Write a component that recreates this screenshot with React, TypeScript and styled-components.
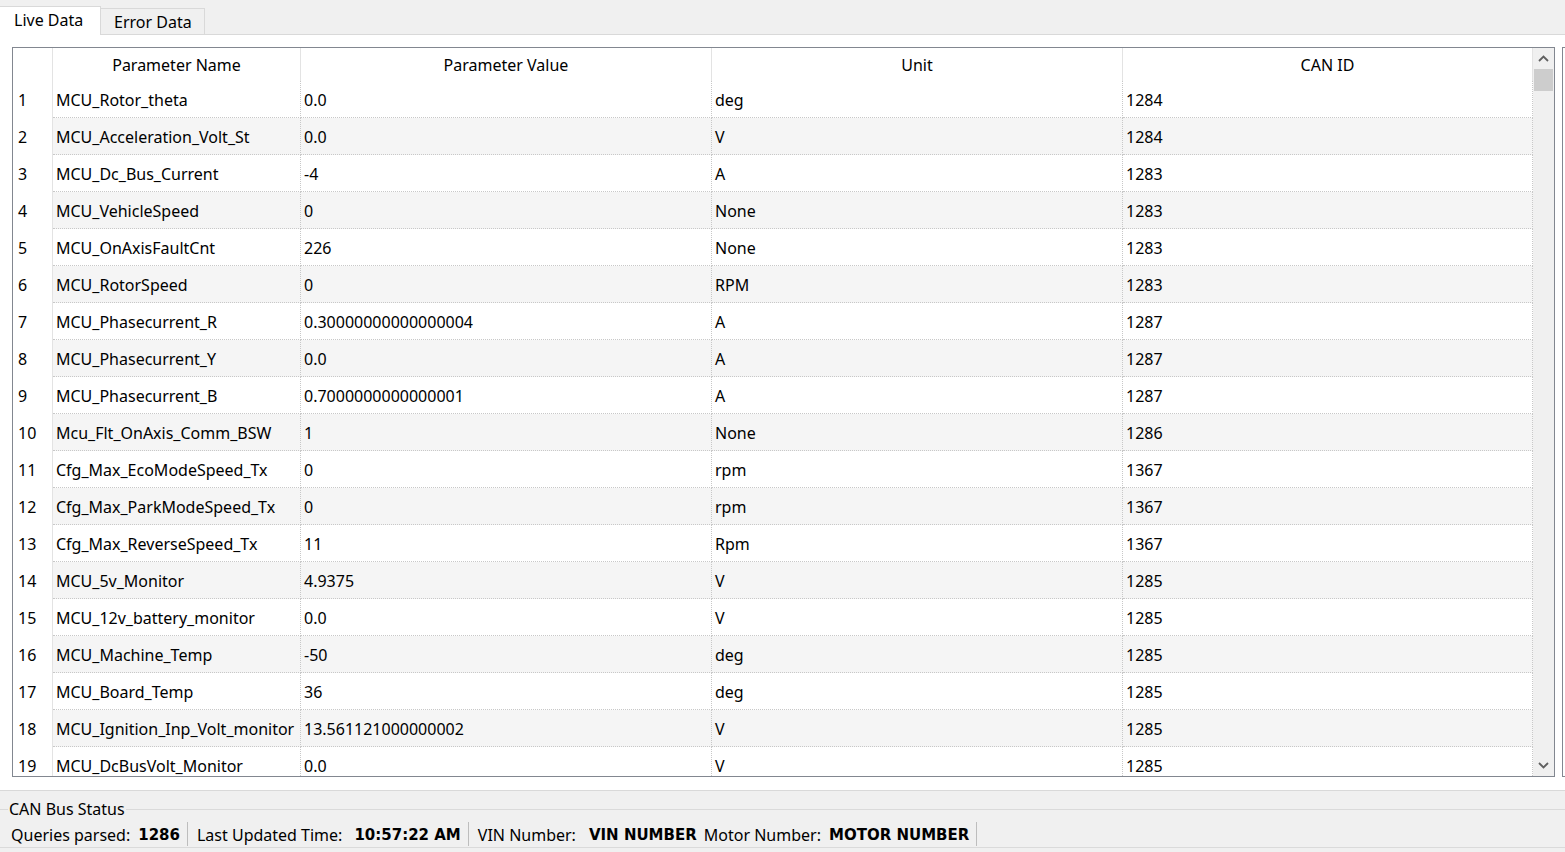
import React from "react";
import styled, { createGlobalStyle } from "styled-components";

const GlobalStyle = createGlobalStyle`
  html, body { margin: 0; padding: 0; }
  body {
    background: #f0f0f0;
    font-family: "Noto Sans", "Open Sans", sans-serif;
    font-size: 16px;
    color: #000;
    overflow: hidden;
  }
  * { box-sizing: border-box; }
`;

const Page = styled.div`
  width: 1565px;
  height: 852px;
  display: flex;
  flex-direction: column;
  overflow: hidden;
`;

const TabBar = styled.div`
  height: 35px;
  flex: none;
  display: flex;
  align-items: flex-end;
  border-bottom: 1px solid #d9d9d9;
`;

const Tab = styled.div<{ $active?: boolean }>`
  width: ${(p) => (p.$active ? "101px" : "104px")};
  height: ${(p) => (p.$active ? "29px" : "26px")};
  margin-bottom: ${(p) => (p.$active ? "-1px" : "0")};
  background: ${(p) => (p.$active ? "#ffffff" : "#f0f0f0")};
  border-top: 1px solid #d9d9d9;
  border-right: 1px solid #d9d9d9;
  padding-left: ${(p) => (p.$active ? "14px" : "13px")};
  padding-bottom: ${(p) => (p.$active ? "2px" : "0")};
  display: flex;
  align-items: center;
  font-size: 16px;
  line-height: 1;
  white-space: nowrap;
`;

const Pane = styled.div`
  flex: none;
  height: 756px;
  background: #fff;
  border-bottom: 1px solid #d9d9d9;
  padding: 12px 0 13px 12px;
  display: flex;
  gap: 7px;
`;

const TableFrame = styled.div`
  width: 1543px;
  height: 730px;
  flex: none;
  border: 1px solid #828790;
  display: flex;
`;

const Stub = styled.div`
  width: 20px;
  height: 730px;
  flex: none;
  border: 1px solid #828790;
  border-right: none;
`;

const GridArea = styled.div`
  width: 1520px;
  height: 728px;
  overflow: hidden;
  display: flex;
  flex-direction: column;
`;

const COLS = "40px 248px 411px 411px 410px";

const HeaderRow = styled.div`
  display: grid;
  grid-template-columns: ${COLS};
  height: 33px;
  flex: none;
`;

const HeaderCell = styled.div`
  display: flex;
  align-items: center;
  justify-content: center;
  border-right: 1px solid #e3e3e3;
  padding-top: 1px;
`;

const Row = styled.div`
  display: grid;
  grid-template-columns: ${COLS};
  height: 37px;
  flex: none;
`;

const RowNum = styled.div`
  background: #fff;
  border-right: 1px solid #e3e3e3;
  padding-left: 5px;
  display: flex;
  align-items: center;
  padding-top: 1px;
`;

const Cell = styled.div<{ $alt: boolean }>`
  background: ${(p) => (p.$alt ? "#f5f5f5" : "#ffffff")};
  border-right: 1px dotted #c8c8c8;
  border-bottom: 1px dotted #c8c8c8;
  padding-left: 3px;
  display: flex;
  align-items: center;
  padding-top: 1px;
  white-space: nowrap;
  overflow: hidden;
`;

const ScrollBar = styled.div`
  width: 21px;
  height: 728px;
  background: #f0f0f0;
  display: flex;
  flex-direction: column;
  align-items: center;
`;

const ArrowBox = styled.div`
  width: 21px;
  height: 21px;
  display: flex;
  align-items: center;
  justify-content: center;
  flex: none;
`;

const Track = styled.div`
  flex: 1;
  width: 100%;
  display: flex;
  flex-direction: column;
  align-items: center;
`;

const Thumb = styled.div`
  width: 19px;
  height: 22px;
  background: #cdcdcd;
`;

const Bottom = styled.div`
  flex: none;
  height: 61px;
  padding-top: 18px;
`;

const GroupBox = styled.div`
  position: relative;
  height: 39px;
  border-top: 1px solid #dadada;
  border-bottom: 1px solid #dadada;
`;

const Legend = styled.span`
  position: absolute;
  left: 8px;
  top: -12px;
  background: #f0f0f0;
  padding: 0 1px;
  font-size: 16px;
  line-height: 22px;
`;

const StatusRow = styled.div`
  display: flex;
  align-items: center;
  height: 100%;
  padding-left: 11px;
  padding-top: 12px;
`;

const Label = styled.span<{ $ml?: number }>`
  font-size: 16px;
  margin-left: ${(p) => p.$ml ?? 0}px;
  white-space: nowrap;
  line-height: 24px;
`;

const Value = styled.span<{ $ml: number }>`
  font-family: "DejaVu Sans", Verdana, sans-serif;
  font-weight: bold;
  font-size: 15px;
  margin-left: ${(p) => p.$ml}px;
  white-space: nowrap;
  line-height: 24px;
`;

const Sep = styled.span<{ $ml: number }>`
  width: 1px;
  height: 24px;
  background: #bdbdbd;
  margin-left: ${(p) => p.$ml}px;
  align-self: flex-start;
`;

const rows: [string, string, string, string][] = [
  ["MCU_Rotor_theta", "0.0", "deg", "1284"],
  ["MCU_Acceleration_Volt_St", "0.0", "V", "1284"],
  ["MCU_Dc_Bus_Current", "-4", "A", "1283"],
  ["MCU_VehicleSpeed", "0", "None", "1283"],
  ["MCU_OnAxisFaultCnt", "226", "None", "1283"],
  ["MCU_RotorSpeed", "0", "RPM", "1283"],
  ["MCU_Phasecurrent_R", "0.30000000000000004", "A", "1287"],
  ["MCU_Phasecurrent_Y", "0.0", "A", "1287"],
  ["MCU_Phasecurrent_B", "0.7000000000000001", "A", "1287"],
  ["Mcu_Flt_OnAxis_Comm_BSW", "1", "None", "1286"],
  ["Cfg_Max_EcoModeSpeed_Tx", "0", "rpm", "1367"],
  ["Cfg_Max_ParkModeSpeed_Tx", "0", "rpm", "1367"],
  ["Cfg_Max_ReverseSpeed_Tx", "11", "Rpm", "1367"],
  ["MCU_5v_Monitor", "4.9375", "V", "1285"],
  ["MCU_12v_battery_monitor", "0.0", "V", "1285"],
  ["MCU_Machine_Temp", "-50", "deg", "1285"],
  ["MCU_Board_Temp", "36", "deg", "1285"],
  ["MCU_Ignition_Inp_Volt_monitor", "13.561121000000002", "V", "1285"],
  ["MCU_DcBusVolt_Monitor", "0.0", "V", "1285"],
];

const Chevron = ({ up }: { up: boolean }) => (
  <svg width="11" height="7" viewBox="0 0 11 7">
    <path
      d={up ? "M1 6 L5.5 1.5 L10 6" : "M1 1 L5.5 5.5 L10 1"}
      fill="none"
      stroke="#606060"
      strokeWidth="1.8"
    />
  </svg>
);

export default function App() {
  return (
    <Page>
      <GlobalStyle />
      <TabBar>
        <Tab $active>Live Data</Tab>
        <Tab>Error Data</Tab>
      </TabBar>
      <Pane>
        <TableFrame>
          <GridArea>
            <HeaderRow>
              <HeaderCell />
              <HeaderCell>Parameter Name</HeaderCell>
              <HeaderCell>Parameter Value</HeaderCell>
              <HeaderCell>Unit</HeaderCell>
              <HeaderCell>CAN ID</HeaderCell>
            </HeaderRow>
            {rows.map((r, i) => {
              const alt = i % 2 === 1;
              return (
                <Row key={i}>
                  <RowNum>{i + 1}</RowNum>
                  {r.map((c, j) => (
                    <Cell key={j} $alt={alt}>
                      {c}
                    </Cell>
                  ))}
                </Row>
              );
            })}
          </GridArea>
          <ScrollBar>
            <ArrowBox>
              <Chevron up />
            </ArrowBox>
            <Track>
              <Thumb />
            </Track>
            <ArrowBox>
              <Chevron up={false} />
            </ArrowBox>
          </ScrollBar>
        </TableFrame>
        <Stub />
      </Pane>
      <Bottom>
        <GroupBox>
          <Legend>CAN Bus Status</Legend>
          <StatusRow>
            <Label>Queries parsed:</Label>
            <Value $ml={8}>1286</Value>
            <Sep $ml={7} />
            <Label $ml={9}>Last Updated Time:</Label>
            <Value $ml={12}>10:57:22 AM</Value>
            <Sep $ml={7} />
            <Label $ml={9}>VIN Number:</Label>
            <Value $ml={13}>VIN NUMBER</Value>
            <Label $ml={7}>Motor Number:</Label>
            <Value $ml={8}>MOTOR NUMBER</Value>
            <Sep $ml={7} />
          </StatusRow>
        </GroupBox>
      </Bottom>
    </Page>
  );
}
